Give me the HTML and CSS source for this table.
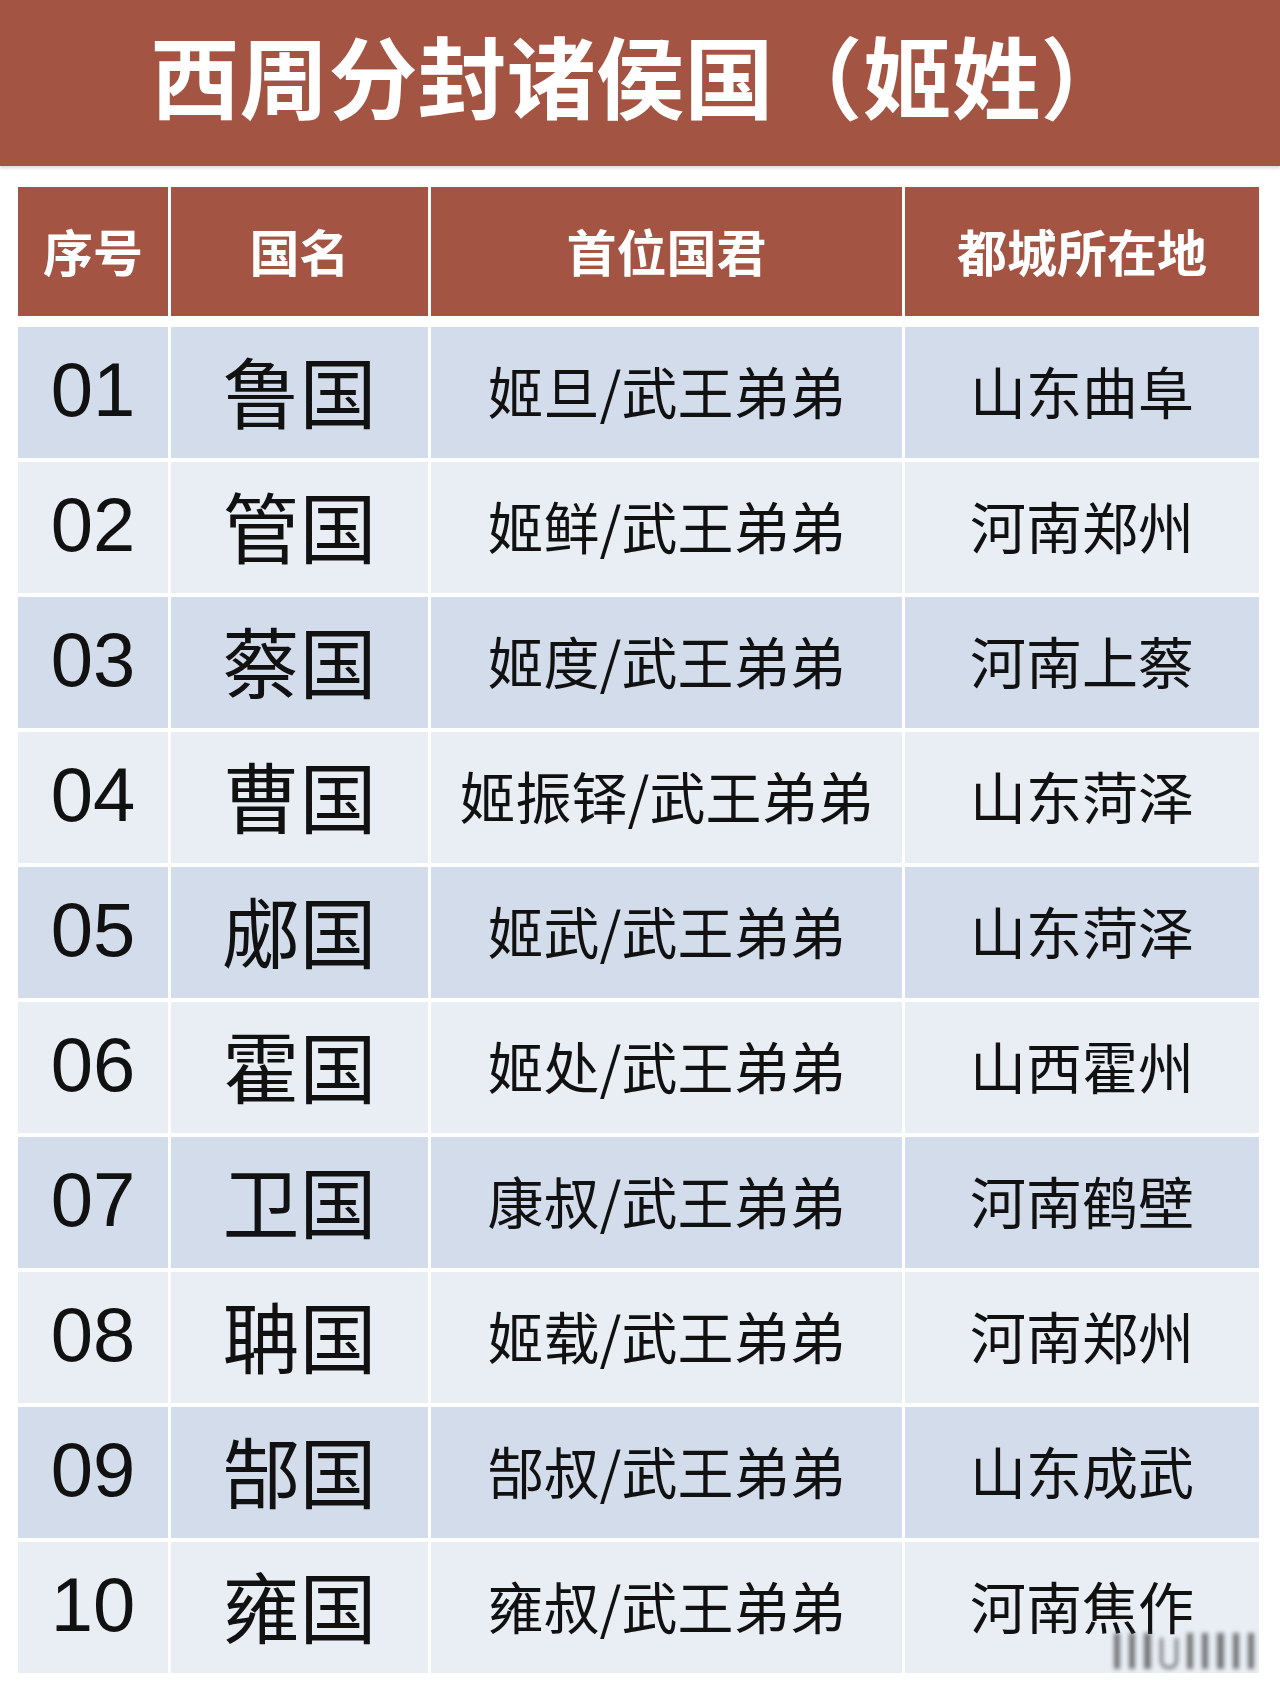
FILE: index.html
```html
<!DOCTYPE html>
<html lang="zh-CN">
<head>
<meta charset="utf-8">
<title>西周分封诸侯国（姬姓）</title>
<link rel="stylesheet" href="styles.css">
</head>
<body>
<div class="page">
  <header class="banner"><h1 class="title">西周分封诸侯国（姬姓）</h1></header>
  <div class="table">
    <div class="row head">
      <div class="cell">序号</div><div class="cell">国名</div><div class="cell">首位国君</div><div class="cell">都城所在地</div>
    </div>
    <div class="body">
      <div class="row odd"><div class="cell num">01</div><div class="cell name">鲁国</div><div class="cell ruler">姬旦/武王弟弟</div><div class="cell city">山东曲阜</div></div>
      <div class="row even"><div class="cell num">02</div><div class="cell name">管国</div><div class="cell ruler">姬鲜/武王弟弟</div><div class="cell city">河南郑州</div></div>
      <div class="row odd"><div class="cell num">03</div><div class="cell name">蔡国</div><div class="cell ruler">姬度/武王弟弟</div><div class="cell city">河南上蔡</div></div>
      <div class="row even"><div class="cell num">04</div><div class="cell name">曹国</div><div class="cell ruler">姬振铎/武王弟弟</div><div class="cell city">山东菏泽</div></div>
      <div class="row odd"><div class="cell num">05</div><div class="cell name">郕国</div><div class="cell ruler">姬武/武王弟弟</div><div class="cell city">山东菏泽</div></div>
      <div class="row even"><div class="cell num">06</div><div class="cell name">霍国</div><div class="cell ruler">姬处/武王弟弟</div><div class="cell city">山西霍州</div></div>
      <div class="row odd"><div class="cell num">07</div><div class="cell name">卫国</div><div class="cell ruler">康叔/武王弟弟</div><div class="cell city">河南鹤壁</div></div>
      <div class="row even"><div class="cell num">08</div><div class="cell name">聃国</div><div class="cell ruler">姬载/武王弟弟</div><div class="cell city">河南郑州</div></div>
      <div class="row odd"><div class="cell num">09</div><div class="cell name">郜国</div><div class="cell ruler">郜叔/武王弟弟</div><div class="cell city">山东成武</div></div>
      <div class="row even last"><div class="cell num">10</div><div class="cell name">雍国</div><div class="cell ruler">雍叔/武王弟弟</div><div class="cell city">河南焦作</div>
        <div class="mark"><span></span><span></span><span></span><span class="o"></span><span></span><span></span><span></span><span></span><span></span></div>
      </div>
    </div>
  </div>
</div>
</body>
</html>
```

FILE: styles.css
```css
html, body {
  margin: 0;
  padding: 0;
  background: #ffffff;
}
.page {
  width: 1280px;
  height: 1698px;
  font-family: "Noto Sans CJK SC", "Noto Sans", sans-serif;
  color: #111111;
}
.banner {
  height: 166px;
  background: #a35443;
  display: flex;
  justify-content: center;
  align-items: center;
  box-shadow: 0 2px 3px rgba(160, 80, 60, 0.25);
}
.title {
  margin: 0 0 20px 0;
  font-size: 89px;
  font-weight: 700;
  color: #ffffff;
  line-height: 1;
  letter-spacing: 0;
}
.table {
  margin: 21px 0 0 18px;
  width: 1242px;
}
.row {
  display: grid;
  grid-template-columns: 150px 257px 471px 354px;
  column-gap: 3px;
}
.head {
  height: 129px;
  background: #ffffff;
}
.head .cell {
  background: #a35443;
  color: #ffffff;
  font-weight: 700;
  font-size: 50px;
  padding-bottom: 4px;
}
.body {
  margin-top: 11px;
  display: flex;
  flex-direction: column;
  gap: 4px;
}
.body .row {
  height: 131px;
  position: relative;
}
.cell {
  display: flex;
  align-items: center;
  justify-content: center;
  line-height: 1;
  padding-bottom: 6px;
  box-sizing: border-box;
}
.odd .cell { background: #d3dcea; }
.even .cell { background: #e9edf4; }
.num {
  font-family: "Liberation Sans", Arial, sans-serif;
  font-size: 76px;
}
.name {
  font-size: 77px;
  font-weight: 400;
}
.ruler, .city {
  font-size: 56px;
}
.mark {
  position: absolute;
  right: 6px;
  bottom: 4px;
  width: 140px;
  height: 38px;
  display: flex;
  align-items: flex-end;
  gap: 9px;
  filter: blur(2px);
  opacity: 0.7;
}
.mark span {
  width: 7px;
  height: 36px;
  background: #444444;
}
.mark span.o {
  width: 14px;
  height: 28px;
  border-radius: 0 0 8px 8px;
  background: transparent;
  border: 3px solid #444444;
  border-top: 0;
}
```
